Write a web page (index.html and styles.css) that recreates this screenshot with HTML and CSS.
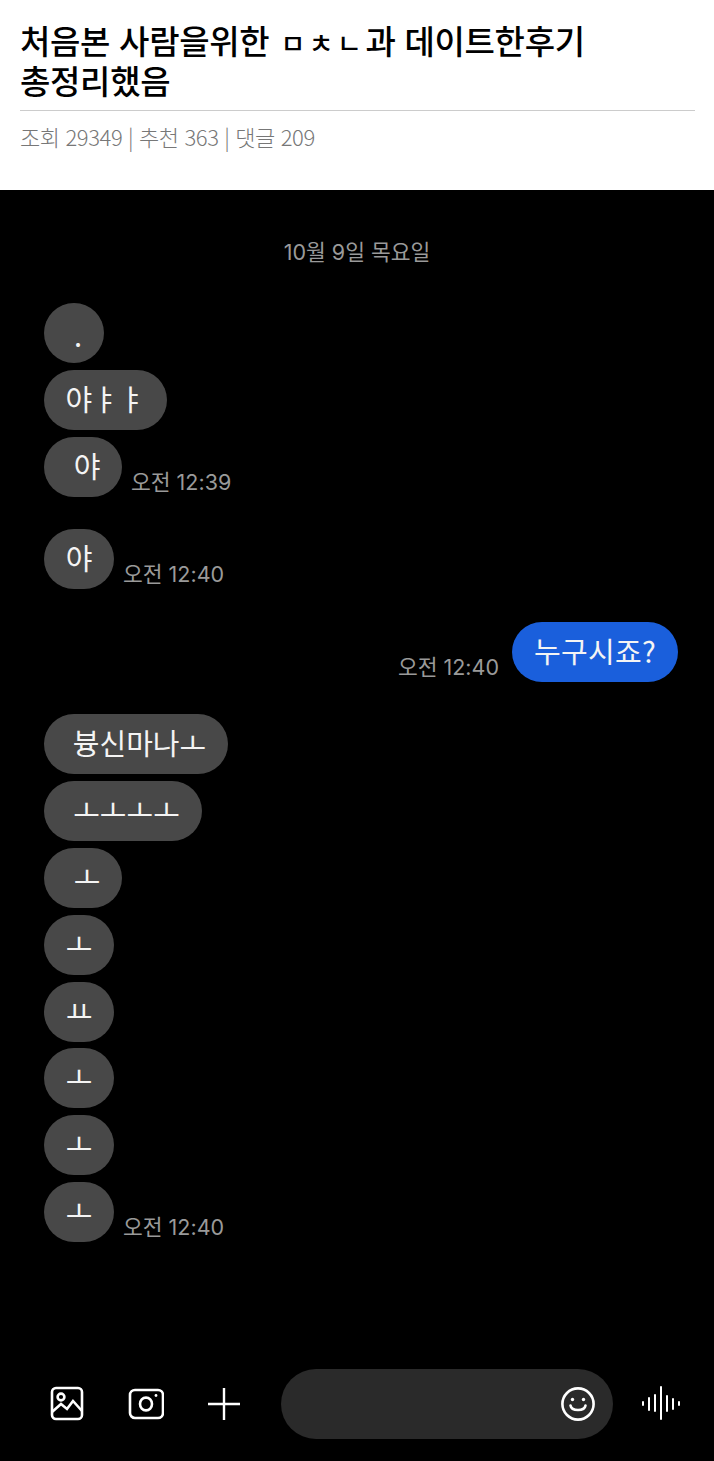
FILE: index.html
```html
<!DOCTYPE html>
<html lang="ko">
<head>
<meta charset="utf-8">
<title>처음본 사람을위한 ㅁㅊㄴ과 데이트한후기 총정리했음</title>
<link rel="stylesheet" href="styles.css">
</head>
<body>
<header class="post-head">
  <h1 class="title">처음본 사람을위한 <span class="jamo">ㅁㅊㄴ</span>과 데이트한후기<br>총정리했음</h1>
  <p class="meta">조회 29349 | 추천 363 | 댓글 209</p>
</header>
<main class="chat">
  <div class="date">10월 9일 목요일</div>
  <div class="group">
    <div class="row"><div class="bubble w60 shift dot">.</div></div>
    <div class="row"><div class="bubble w123">야ㅑㅑ</div></div>
    <div class="row"><div class="bubble w78 shift">야</div><span class="time">오전 12:39</span></div>
  </div>
  <div class="group">
    <div class="row"><div class="bubble w70">야</div><span class="time">오전 12:40</span></div>
  </div>
  <div class="group">
    <div class="row mine"><span class="time">오전 12:40</span><div class="bubble blue">누구시죠?</div></div>
  </div>
  <div class="group">
    <div class="row"><div class="bubble w184 nudge">븅신마나ㅗ</div></div>
    <div class="row"><div class="bubble w158 nudge">ㅗㅗㅗㅗ</div></div>
    <div class="row"><div class="bubble w78 shift">ㅗ</div></div>
    <div class="row"><div class="bubble w70">ㅗ</div></div>
    <div class="row"><div class="bubble w70">ㅛ</div></div>
    <div class="row"><div class="bubble w70">ㅗ</div></div>
    <div class="row"><div class="bubble w70">ㅗ</div></div>
    <div class="row"><div class="bubble w70">ㅗ</div><span class="time">오전 12:40</span></div>
  </div>
  <div class="composer">
    <svg class="icon" width="36" height="36" viewBox="0 0 36 36" fill="none" stroke="#fff" stroke-width="2.6"><rect x="2" y="2" width="30" height="31" rx="4"/><circle cx="11" cy="11" r="3.4"/><path d="M2 26l9-8 6 5 6-8 9 10"/></svg>
    <svg class="icon" width="36" height="36" viewBox="0 0 36 36" fill="none" stroke="#fff" stroke-width="2.6"><rect x="2" y="4" width="33" height="28" rx="5"/><ellipse cx="18" cy="18" rx="6" ry="6.4"/><circle cx="28" cy="9.5" r="1.4" fill="#fff" stroke="none"/></svg>
    <svg class="icon" width="36" height="36" viewBox="0 0 36 36" fill="none" stroke="#fff" stroke-width="2.4"><path d="M18 2v32M2 18h32"/></svg>
    <div class="input">
      <svg width="36" height="36" viewBox="0 0 36 36" fill="none" stroke="#fff" stroke-width="2.6"><circle cx="18" cy="18" r="15.6"/><path d="M10.500 19.500c1 6 14 6 15 0" stroke-linecap="round"/><circle cx="12.500" cy="13.500" r="1.700" fill="#fff" stroke="none"/><circle cx="23.500" cy="13.500" r="1.700" fill="#fff" stroke="none"/></svg>
    </div>
    <svg class="wave" width="38" height="36" viewBox="0 0 38 36" fill="none" stroke="#fff" stroke-width="2" stroke-linecap="round"><path d="M1 16v3M7 12v12M13 9v16M19 1v32M25 10v15M31 13v10M37 16v3"/></svg>
  </div>
</main>
</body>
</html>
```
FILE: styles.css
```css
* { box-sizing: border-box; }
html, body { margin: 0; padding: 0; }
body {
  width: 714px;
  height: 1461px;
  overflow: hidden;
  background: #000;
  font-family: "Noto Sans CJK KR", "Noto Sans", sans-serif;
}
.post-head {
  height: 190px;
  padding: 20px 19px 0 20px;
  background: #fff;
}
.title {
  margin: 0;
  height: 91px;
  border-bottom: 1px solid #ccc;
  color: #000;
  font-size: 33px;
  font-weight: 500;
  line-height: 40px;
  letter-spacing: -0.3px;
}
.jamo {
  margin-left: 2px;
  font-size: 27px;
  line-height: 1;
  letter-spacing: 3.5px;
}
.meta {
  margin: 12px 0 0;
  color: #777;
  font-size: 22px;
  font-weight: 300;
  line-height: 26px;
  letter-spacing: -0.4px;
}
.chat {
  height: 1271px;
  padding: 45px 36px 0 44px;
  background: #000;
  color: #fff;
}
.date {
  height: 68px;
  margin-left: -8px;
  text-align: center;
  color: #9a9a9a;
  font-family: Inter, "Noto Sans CJK KR", sans-serif;
  font-size: 21.500px;
  line-height: 34px;
}
.group {
  display: flex;
  flex-direction: column;
  gap: 6.8px;
  margin-bottom: 32.6px;
}
.row { display: flex; align-items: flex-end; gap: 9px; }
.mine { justify-content: flex-end; gap: 13px; }
.bubble {
  display: flex;
  align-items: center;
  justify-content: center;
  height: 60px;
  padding-bottom: 3px;
  border-radius: 30px;
  background: #484848;
  color: #f4f4f4;
  font-size: 29px;
  line-height: 1;
  white-space: nowrap;
}
.blue { width: 166px; background: #1a5fdc; letter-spacing: 0.3px; }
.shift { padding-left: 8px; }
.nudge { padding-left: 7px; }
.dot { padding-top: 2px; padding-bottom: 0; }
.w60 { width: 60px; }
.w70 { width: 70px; }
.w78 { width: 78px; }
.w123 { width: 123px; }
.w158 { width: 158px; }
.w184 { width: 184px; }
.time {
  color: #9a9a9a;
  font-family: Inter, "Noto Sans CJK KR", sans-serif;
  font-size: 21.500px;
  line-height: 30px;
}
.composer {
  display: flex;
  align-items: center;
  height: 70px;
  margin: 127px -20px 0 6px;
}
.icon { flex: none; margin-right: 42px; }
.icon:nth-child(3) { margin-right: 39px; }
.input {
  display: flex;
  align-items: center;
  justify-content: flex-end;
  width: 332px;
  height: 70px;
  padding-right: 17px;
  border-radius: 35px;
  background: #2a2a2a;
}
.wave { flex: none; margin-left: 29px; }
```
